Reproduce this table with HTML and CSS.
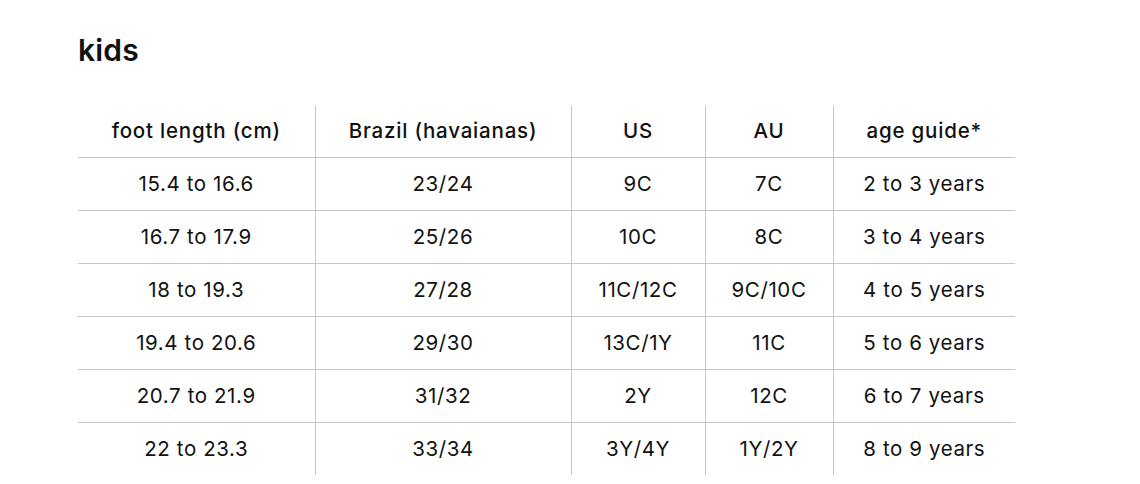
FILE: index.html
```html
<!DOCTYPE html>
<html>
<head>
<meta charset="utf-8">
<link rel="stylesheet" href="styles.css">
</head>
<body>
<div class="page">
  <h2 class="title">kids</h2>
  <table class="sizes">
    <colgroup>
      <col class="c1"><col class="c2"><col class="c3"><col class="c4"><col class="c5">
    </colgroup>
    <thead>
      <tr><th>foot length (cm)</th><th>Brazil (havaianas)</th><th>US</th><th>AU</th><th>age guide*</th></tr>
    </thead>
    <tbody>
      <tr><td>15.4 to 16.6</td><td>23/24</td><td>9C</td><td>7C</td><td>2 to 3 years</td></tr>
      <tr><td>16.7 to 17.9</td><td>25/26</td><td>10C</td><td>8C</td><td>3 to 4 years</td></tr>
      <tr><td>18 to 19.3</td><td>27/28</td><td>11C/12C</td><td>9C/10C</td><td>4 to 5 years</td></tr>
      <tr><td>19.4 to 20.6</td><td>29/30</td><td>13C/1Y</td><td>11C</td><td>5 to 6 years</td></tr>
      <tr><td>20.7 to 21.9</td><td>31/32</td><td>2Y</td><td>12C</td><td>6 to 7 years</td></tr>
      <tr><td>22 to 23.3</td><td>33/34</td><td>3Y/4Y</td><td>1Y/2Y</td><td>8 to 9 years</td></tr>
    </tbody>
  </table>
</div>
</body>
</html>
```
FILE: styles.css
```css
html, body {
  margin: 0;
  padding: 0;
  background: #fff;
}
body {
  font-family: Inter, "Liberation Sans", sans-serif;
  color: #111;
}
.page {
  padding: 32px 0 0 78px;
}
.title {
  margin: 0;
  font-size: 30px;
  font-weight: 600;
  line-height: 36px;
  letter-spacing: 0.2px;
}
.sizes {
  margin-top: 38px;
  border-collapse: collapse;
  width: 937px;
  table-layout: fixed;
}
.c1 { width: 237px; }
.c2 { width: 256px; }
.c3 { width: 134px; }
.c4 { width: 128px; }
.c5 { width: 182px; }
.sizes th, .sizes td {
  text-align: center;
  font-size: 20.5px;
  padding: 0 0 2px 0;
  border-left: 1px solid #c6c6c6;
  letter-spacing: 0.6px;
}
.sizes th:first-child, .sizes td:first-child {
  border-left: none;
}
.sizes th {
  font-weight: 500;
  letter-spacing: 0.8px;
  height: 49px;
  border-bottom: 1px solid #c6c6c6;
}
.sizes td {
  font-weight: 400;
  height: 50px;
}
.sizes tbody tr + tr td {
  border-top: 1px solid #c6c6c6;
}
```
